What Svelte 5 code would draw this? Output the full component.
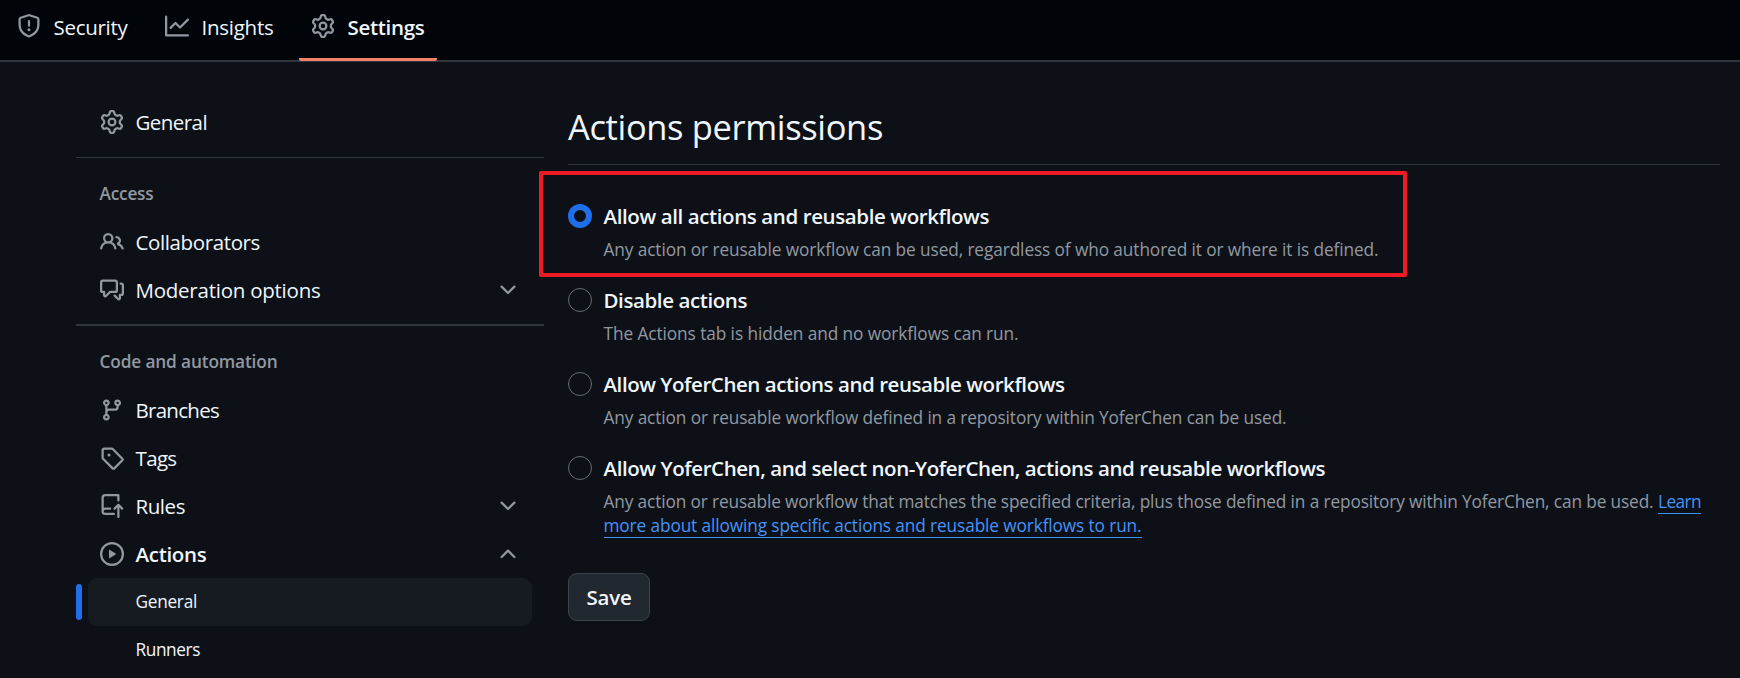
<script>
  const paths = {
    shield:
      'M7.467.133a1.748 1.748 0 0 1 1.066 0l5.25 1.68A1.75 1.75 0 0 1 15 3.48V7c0 1.566-.32 3.182-1.303 4.682-.983 1.498-2.585 2.813-5.032 3.855a1.697 1.697 0 0 1-1.33 0c-2.447-1.042-4.049-2.357-5.032-3.855C1.32 10.182 1 8.566 1 7V3.48a1.75 1.75 0 0 1 1.217-1.667Zm.61 1.429a.25.25 0 0 0-.153 0l-5.25 1.68a.25.25 0 0 0-.174.238V7c0 1.358.275 2.666 1.057 3.86.784 1.194 2.121 2.34 4.366 3.297a.196.196 0 0 0 .154 0c2.245-.956 3.582-2.104 4.366-3.298C13.225 9.666 13.5 8.36 13.5 7V3.48a.251.251 0 0 0-.174-.237l-5.25-1.68ZM8.75 4.75v3a.75.75 0 0 1-1.5 0v-3a.75.75 0 0 1 1.5 0ZM9 10.5a1 1 0 1 1-2 0 1 1 0 0 1 2 0Z',
    graph:
      'M1.5 1.75V13.5h13.75a.75.75 0 0 1 0 1.5H.75a.75.75 0 0 1-.75-.75V1.75a.75.75 0 0 1 1.5 0Zm14.28 2.53-5.25 5.25a.75.75 0 0 1-1.06 0L7 7.06 4.28 9.78a.751.751 0 0 1-1.042-.018.751.751 0 0 1-.018-1.042l3.25-3.25a.75.75 0 0 1 1.06 0L10 7.94l4.72-4.72a.751.751 0 0 1 1.042.018.751.751 0 0 1 .018 1.042Z',
    gear:
      'M8 0a8.2 8.2 0 0 1 .701.031C9.444.095 9.99.645 10.16 1.29l.288 1.107c.018.066.079.158.212.224.231.114.454.243.668.386.123.082.233.09.299.071l1.103-.303c.644-.176 1.392.021 1.82.63.27.385.506.792.704 1.218.315.675.111 1.422-.364 1.891l-.814.806c-.049.048-.098.147-.088.294.016.257.016.515 0 .772-.01.147.038.246.088.294l.814.806c.475.469.679 1.216.364 1.891a7.977 7.977 0 0 1-.704 1.217c-.428.61-1.176.807-1.82.63l-1.102-.302c-.067-.019-.177-.011-.3.071a5.909 5.909 0 0 1-.668.386c-.133.066-.194.158-.211.224l-.29 1.106c-.168.646-.715 1.196-1.458 1.26a8.006 8.006 0 0 1-1.402 0c-.743-.064-1.289-.614-1.458-1.26l-.289-1.106c-.018-.066-.079-.158-.212-.224a5.738 5.738 0 0 1-.668-.386c-.123-.082-.233-.09-.299-.071l-1.103.303c-.644.176-1.392-.021-1.82-.63a8.12 8.12 0 0 1-.704-1.218c-.315-.675-.111-1.422.363-1.891l.815-.806c.05-.048.098-.147.088-.294a6.214 6.214 0 0 1 0-.772c.01-.147-.038-.246-.088-.294l-.815-.806C.635 6.045.431 5.298.746 4.623a7.92 7.92 0 0 1 .704-1.217c.428-.61 1.176-.807 1.82-.63l1.102.302c.067.019.177.011.3-.071.214-.143.437-.272.668-.386.133-.066.194-.158.211-.224l.29-1.106C6.009.645 6.556.095 7.299.03 7.53.01 7.764 0 8 0Zm-.571 1.525c-.036.003-.108.036-.137.146l-.289 1.105c-.147.561-.549.967-.998 1.189-.173.086-.34.183-.5.29-.417.278-.97.423-1.529.27l-1.103-.303c-.109-.03-.175.016-.195.045-.22.312-.412.644-.573.99-.014.031-.021.11.059.19l.815.806c.411.406.562.957.53 1.456a4.709 4.709 0 0 0 0 .582c.032.499-.119 1.05-.53 1.456l-.815.806c-.081.08-.073.159-.059.19.162.346.353.677.573.989.02.03.085.076.195.046l1.102-.303c.56-.153 1.113-.008 1.53.27.161.107.328.204.501.29.447.222.85.629.997 1.189l.289 1.105c.029.109.101.143.137.146a6.6 6.6 0 0 0 1.142 0c.036-.003.108-.036.137-.146l.289-1.105c.147-.561.549-.967.998-1.189.173-.086.34-.183.5-.29.417-.278.97-.423 1.529-.27l1.103.303c.109.029.175-.016.195-.045.22-.313.411-.644.573-.99.014-.031.021-.11-.059-.19l-.815-.806c-.411-.406-.562-.957-.53-1.456a4.709 4.709 0 0 0 0-.582c-.032-.499.119-1.05.53-1.456l.815-.806c.081-.08.073-.159.059-.19a6.464 6.464 0 0 0-.573-.989c-.02-.03-.085-.076-.195-.046l-1.102.303c-.56.153-1.113.008-1.53-.27a4.44 4.44 0 0 0-.501-.29c-.447-.222-.85-.629-.997-1.189l-.289-1.105c-.029-.11-.101-.143-.137-.146a6.6 6.6 0 0 0-1.142 0ZM11 8a3 3 0 1 1-6 0 3 3 0 0 1 6 0ZM9.5 8a1.5 1.5 0 1 0-3.001.001A1.5 1.5 0 0 0 9.5 8Z',
    people:
      'M2 5.5a3.5 3.5 0 1 1 5.898 2.549 5.508 5.508 0 0 1 3.034 4.084.75.75 0 1 1-1.482.235 4 4 0 0 0-7.9 0 .75.75 0 0 1-1.482-.236A5.507 5.507 0 0 1 3.102 8.05 3.493 3.493 0 0 1 2 5.5ZM11 4a3.001 3.001 0 0 1 2.22 5.018 5.01 5.01 0 0 1 2.56 3.012.749.749 0 0 1-.885.954.752.752 0 0 1-.549-.514 3.507 3.507 0 0 0-2.522-2.372.75.75 0 0 1-.574-.73v-.352a.75.75 0 0 1 .416-.672A1.5 1.5 0 0 0 11 5.5.75.75 0 0 1 11 4Zm-5.5-.5a2 2 0 1 0-.001 3.999A2 2 0 0 0 5.5 3.5Z',
    discussion:
      'M1.75 1h8.5c.966 0 1.75.784 1.75 1.75v5.5A1.75 1.75 0 0 1 10.25 10H7.061l-2.574 2.573A1.458 1.458 0 0 1 2 11.543V10h-.25A1.75 1.75 0 0 1 0 8.25v-5.5C0 1.784.784 1 1.75 1ZM1.5 2.75v5.5c0 .138.112.25.25.25h1a.75.75 0 0 1 .75.75v2.19l2.72-2.72a.749.749 0 0 1 .53-.22h3.5a.25.25 0 0 0 .25-.25v-5.5a.25.25 0 0 0-.25-.25h-8.5a.25.25 0 0 0-.25.25Zm13 2a.25.25 0 0 0-.25-.25h-.5a.75.75 0 0 1 0-1.5h.5c.966 0 1.75.784 1.75 1.75v5.5A1.75 1.75 0 0 1 14.25 12H14v1.543a1.458 1.458 0 0 1-2.487 1.03L9.22 12.28a.749.749 0 0 1 .326-1.275.749.749 0 0 1 .734.215l2.22 2.22v-2.19a.75.75 0 0 1 .75-.75h1a.25.25 0 0 0 .25-.25Z',
    branch:
      'M9.5 3.25a2.25 2.25 0 1 1 3 2.122V6A2.5 2.5 0 0 1 10 8.5H6a1 1 0 0 0-1 1v1.128a2.251 2.251 0 1 1-1.5 0V5.372a2.25 2.25 0 1 1 1.5 0v1.836A2.493 2.493 0 0 1 6 7h4a1 1 0 0 0 1-1v-.628A2.25 2.25 0 0 1 9.5 3.25Zm-6 0a.75.75 0 1 0 1.5 0 .75.75 0 0 0-1.5 0Zm8.25-.75a.75.75 0 1 0 0 1.5.75.75 0 0 0 0-1.5ZM4.25 12a.75.75 0 1 0 0 1.5.75.75 0 0 0 0-1.5Z',
    tag:
      'M1 7.775V2.75C1 1.784 1.784 1 2.75 1h5.025c.464 0 .91.184 1.238.513l6.25 6.25a1.75 1.75 0 0 1 0 2.474l-5.026 5.026a1.75 1.75 0 0 1-2.474 0l-6.25-6.25A1.752 1.752 0 0 1 1 7.775Zm1.5 0c0 .066.026.13.073.177l6.25 6.25a.25.25 0 0 0 .354 0l5.025-5.025a.25.25 0 0 0 0-.354l-6.25-6.25a.25.25 0 0 0-.177-.073H2.75a.25.25 0 0 0-.25.25ZM6 5a1 1 0 1 1 0 2 1 1 0 0 1 0-2Z',
    rules:
      'M1 2.5A2.5 2.5 0 0 1 3.5 0h8.75a.75.75 0 0 1 .75.75v3.5a.75.75 0 0 1-1.5 0V1.5h-8a1 1 0 0 0-1 1v6.708A2.493 2.493 0 0 1 3.5 9h3.25a.75.75 0 0 1 0 1.5H3.5a1 1 0 0 0 0 2h5.75a.75.75 0 0 1 0 1.5H3.5A2.5 2.5 0 0 1 1 11.5Zm13.23 7.79h-.001l-1.224-1.224v6.184a.75.75 0 0 1-1.5 0V9.066L10.28 10.29a.75.75 0 0 1-1.06-1.061l2.505-2.504a.75.75 0 0 1 1.06 0L15.29 9.23a.751.751 0 0 1-.018 1.042.751.751 0 0 1-1.042.018Z',
    play:
      'M8 0a8 8 0 1 1 0 16A8 8 0 0 1 8 0ZM1.5 8a6.5 6.5 0 1 0 13 0 6.5 6.5 0 0 0-13 0Zm4.879-2.773 4.264 2.559a.25.25 0 0 1 0 .428l-4.264 2.559A.25.25 0 0 1 6 10.559V5.442a.25.25 0 0 1 .379-.215Z',
    down:
      'M12.78 5.22a.749.749 0 0 1 0 1.06l-4.25 4.25a.749.749 0 0 1-1.06 0L3.22 6.28a.749.749 0 1 1 1.06-1.06L8 8.939l3.72-3.719a.749.749 0 0 1 1.06 0Z',
    up:
      'M3.22 10.53a.749.749 0 0 1 0-1.06l4.25-4.25a.749.749 0 0 1 1.06 0l4.25 4.25a.749.749 0 1 1-1.06 1.06L8 6.811 4.28 10.53a.749.749 0 0 1-1.06 0Z'
  };

  const tabs = [
    { icon: 'shield', label: 'Security', width: 74 },
    { icon: 'graph', label: 'Insights', width: 72 },
    { icon: 'gear', label: 'Settings', width: 77, active: true }
  ];

  const groups = [
    { items: [{ icon: 'gear', label: 'General', width: 71.5 }] },
    {
      title: 'Access',
      titleWidth: 54,
      items: [
        { icon: 'people', label: 'Collaborators', width: 124.5 },
        { icon: 'discussion', label: 'Moderation options', width: 185, chevron: 'down' }
      ]
    },
    {
      title: 'Code and automation',
      titleWidth: 178,
      items: [
        { icon: 'branch', label: 'Branches', width: 83.5 },
        { icon: 'tag', label: 'Tags', width: 41 },
        { icon: 'rules', label: 'Rules', width: 49.5, chevron: 'down' },
        { icon: 'play', label: 'Actions', width: 71, chevron: 'up', active: true }
      ]
    }
  ];

  const subItems = [
    { label: 'General', width: 61.5, active: true },
    { label: 'Runners', width: 64.5 }
  ];

  const options = [
    {
      label: 'Allow all actions and reusable workflows',
      width: 385.5,
      lines: [{ text: 'Any action or reusable workflow can be used, regardless of who authored it or where it is defined.', width: 775 }],
      checked: true
    },
    {
      label: 'Disable actions',
      width: 143.5,
      lines: [{ text: 'The Actions tab is hidden and no workflows can run.', width: 415 }]
    },
    {
      label: 'Allow YoferChen actions and reusable workflows',
      width: 461,
      lines: [{ text: 'Any action or reusable workflow defined in a repository within YoferChen can be used.', width: 683 }]
    },
    {
      label: 'Allow YoferChen, and select non-YoferChen, actions and reusable workflows',
      width: 721.5,
      lines: [
        {
          text: 'Any action or reusable workflow that matches the specified criteria, plus those defined in a repository within YoferChen, can be used.',
          width: 1050,
          link: 'Learn',
          linkWidth: 43
        },
        { link: 'more about allowing specific actions and reusable workflows to run.', linkWidth: 538 }
      ]
    }
  ];

  // Tracks the text so that it occupies the given advance width.
  function fit(node, width) {
    const natural = node.getBoundingClientRect().width;
    node.style.letterSpacing = `${(width - natural) / node.textContent.length}px`;
  }
</script>

{#snippet icon(name)}
  <svg class="icon" viewBox="0 0 16 16" aria-hidden="true"><path d={paths[name]} /></svg>
{/snippet}

<div class="page">
  <nav class="tabs">
    {#each tabs as tab}
      <a class="tab" class:active={tab.active} href="#{tab.label}">
        {@render icon(tab.icon)}
        <span class="text" use:fit={tab.width}>{tab.label}</span>
      </a>
    {/each}
  </nav>

  <div class="body">
    <aside>
      {#each groups as group}
        <section class="group">
          {#if group.title}
            <h3><span class="text" use:fit={group.titleWidth}>{group.title}</span></h3>
          {/if}
          {#each group.items as item}
            <a class="item" class:bold={item.active} href="#{item.label}">
              {@render icon(item.icon)}
              <span class="text" use:fit={item.width}>{item.label}</span>
              {#if item.chevron}
                <span class="chevron">{@render icon(item.chevron)}</span>
              {/if}
            </a>
          {/each}
        </section>
      {/each}
      {#each subItems as item}
        <a class="sub" class:current={item.active} href="#{item.label}">
          <span class="text" use:fit={item.width}>{item.label}</span>
        </a>
      {/each}
    </aside>

    <main>
      <h2><span class="text" use:fit={315}>Actions permissions</span></h2>
      <div class="options">
        {#each options as option}
          <div class="option">
            <span class="radio" class:checked={option.checked}></span>
            <div class="copy">
              <div class="label"><span class="text" use:fit={option.width}>{option.label}</span></div>
              {#each option.lines as line}
                <div class="desc">
                  {#if line.text}<span class="text" use:fit={line.width}>{line.text}</span>{/if}
                  {#if line.link}<a class="text link" href="#learn" use:fit={line.linkWidth}>{line.link}</a>{/if}
                </div>
              {/each}
            </div>
            {#if option.checked}<div class="highlight"></div>{/if}
          </div>
        {/each}
      </div>
      <button type="button"><span class="text" use:fit={45}>Save</span></button>
    </main>
  </div>
</div>

<style>
  :global(body) {
    background: #0d1117;
  }
  .page {
    box-sizing: border-box;
    width: 1740px;
    height: 678px;
    overflow: hidden;
    background: #0d1117;
    color: #f0f6fc;
    font: 400 20.5px/24px 'Open Sans', 'Noto Sans', sans-serif;
  }
  a {
    color: inherit;
    text-decoration: none;
  }
  .text {
    display: inline-block;
    white-space: nowrap;
  }
  .icon {
    display: block;
    flex: none;
    width: 24px;
    height: 24px;
    fill: #9198a1;
  }
  .tabs {
    display: flex;
    box-sizing: border-box;
    height: 62px;
    padding-left: 5px;
    gap: 13.5px;
    background: #010409;
    border-bottom: 2px solid #2f353d;
  }
  .tab {
    display: flex;
    box-sizing: border-box;
    height: 61px;
    padding: 14px 12px 0;
    gap: 12.5px;
    border-bottom: 3px solid transparent;
  }
  .tab .text {
    padding-top: 1px;
  }
  .tab.active {
    border-bottom-color: #f78166;
    border-radius: 2px;
    font-weight: 600;
  }
  .body {
    display: flex;
    gap: 24px;
    padding: 36px 20px 0 76px;
  }
  aside {
    flex: none;
    width: 468px;
  }
  .group + .group {
    margin-top: 11px;
    padding-top: 24px;
    border-top: 1px solid #30363d;
  }
  .group:nth-of-type(3) {
    margin-top: 10px;
    border-top-width: 2px;
  }
  h3 {
    margin: 0 0 12px;
    padding-left: 23.5px;
    color: #9198a1;
    font-size: 17.25px;
    font-weight: 600;
    line-height: 24px;
  }
  .item {
    display: flex;
    align-items: center;
    height: 48px;
    padding: 0 24px;
    gap: 11.5px;
  }
  .bold {
    font-weight: 600;
  }
  .chevron {
    margin-left: auto;
  }
  .sub {
    position: relative;
    display: flex;
    align-items: center;
    height: 48px;
    margin: 0 12px;
    padding-left: 47.5px;
    border-radius: 9px;
    font-size: 17.25px;
  }
  .current {
    background: #161b22;
  }
  .current::before {
    content: '';
    position: absolute;
    left: -12px;
    top: 6px;
    width: 6px;
    height: 36px;
    border-radius: 3px;
    background: #1f6feb;
  }
  main {
    flex: 1;
    min-width: 0;
  }
  h2 {
    margin: 0;
    padding: 5px 0 13px;
    border-bottom: 1px solid #30363d;
    font-size: 34.5px;
    font-weight: 400;
    line-height: 48px;
  }
  .options {
    display: flex;
    flex-direction: column;
    gap: 26px;
    padding-top: 39px;
  }
  .option {
    position: relative;
    display: flex;
    gap: 11.5px;
  }
  .radio {
    flex: none;
    box-sizing: border-box;
    width: 24px;
    height: 24px;
    border: 1px solid #656c76;
    border-radius: 50%;
  }
  .radio.checked {
    border: 6px solid #1f6feb;
  }
  .label {
    margin-bottom: 10px;
    font-weight: 600;
  }
  .desc {
    display: flex;
    gap: 4.5px;
    color: #9198a1;
    font-size: 17.25px;
    line-height: 24px;
  }
  .link {
    height: 23px;
    border-bottom: 1px solid #4493f8;
    color: #4493f8;
  }
  .highlight {
    position: absolute;
    left: -29px;
    top: -33px;
    box-sizing: border-box;
    width: 868px;
    height: 106px;
    border: 4px solid #ed1c24;
    border-radius: 2px;
  }
  button {
    box-sizing: border-box;
    width: 82px;
    height: 48px;
    margin-top: 35px;
    padding: 0;
    border: 1px solid #3d444d;
    border-radius: 9px;
    background: #212830;
    color: #f0f6fc;
    font: inherit;
    font-weight: 600;
  }
</style>
